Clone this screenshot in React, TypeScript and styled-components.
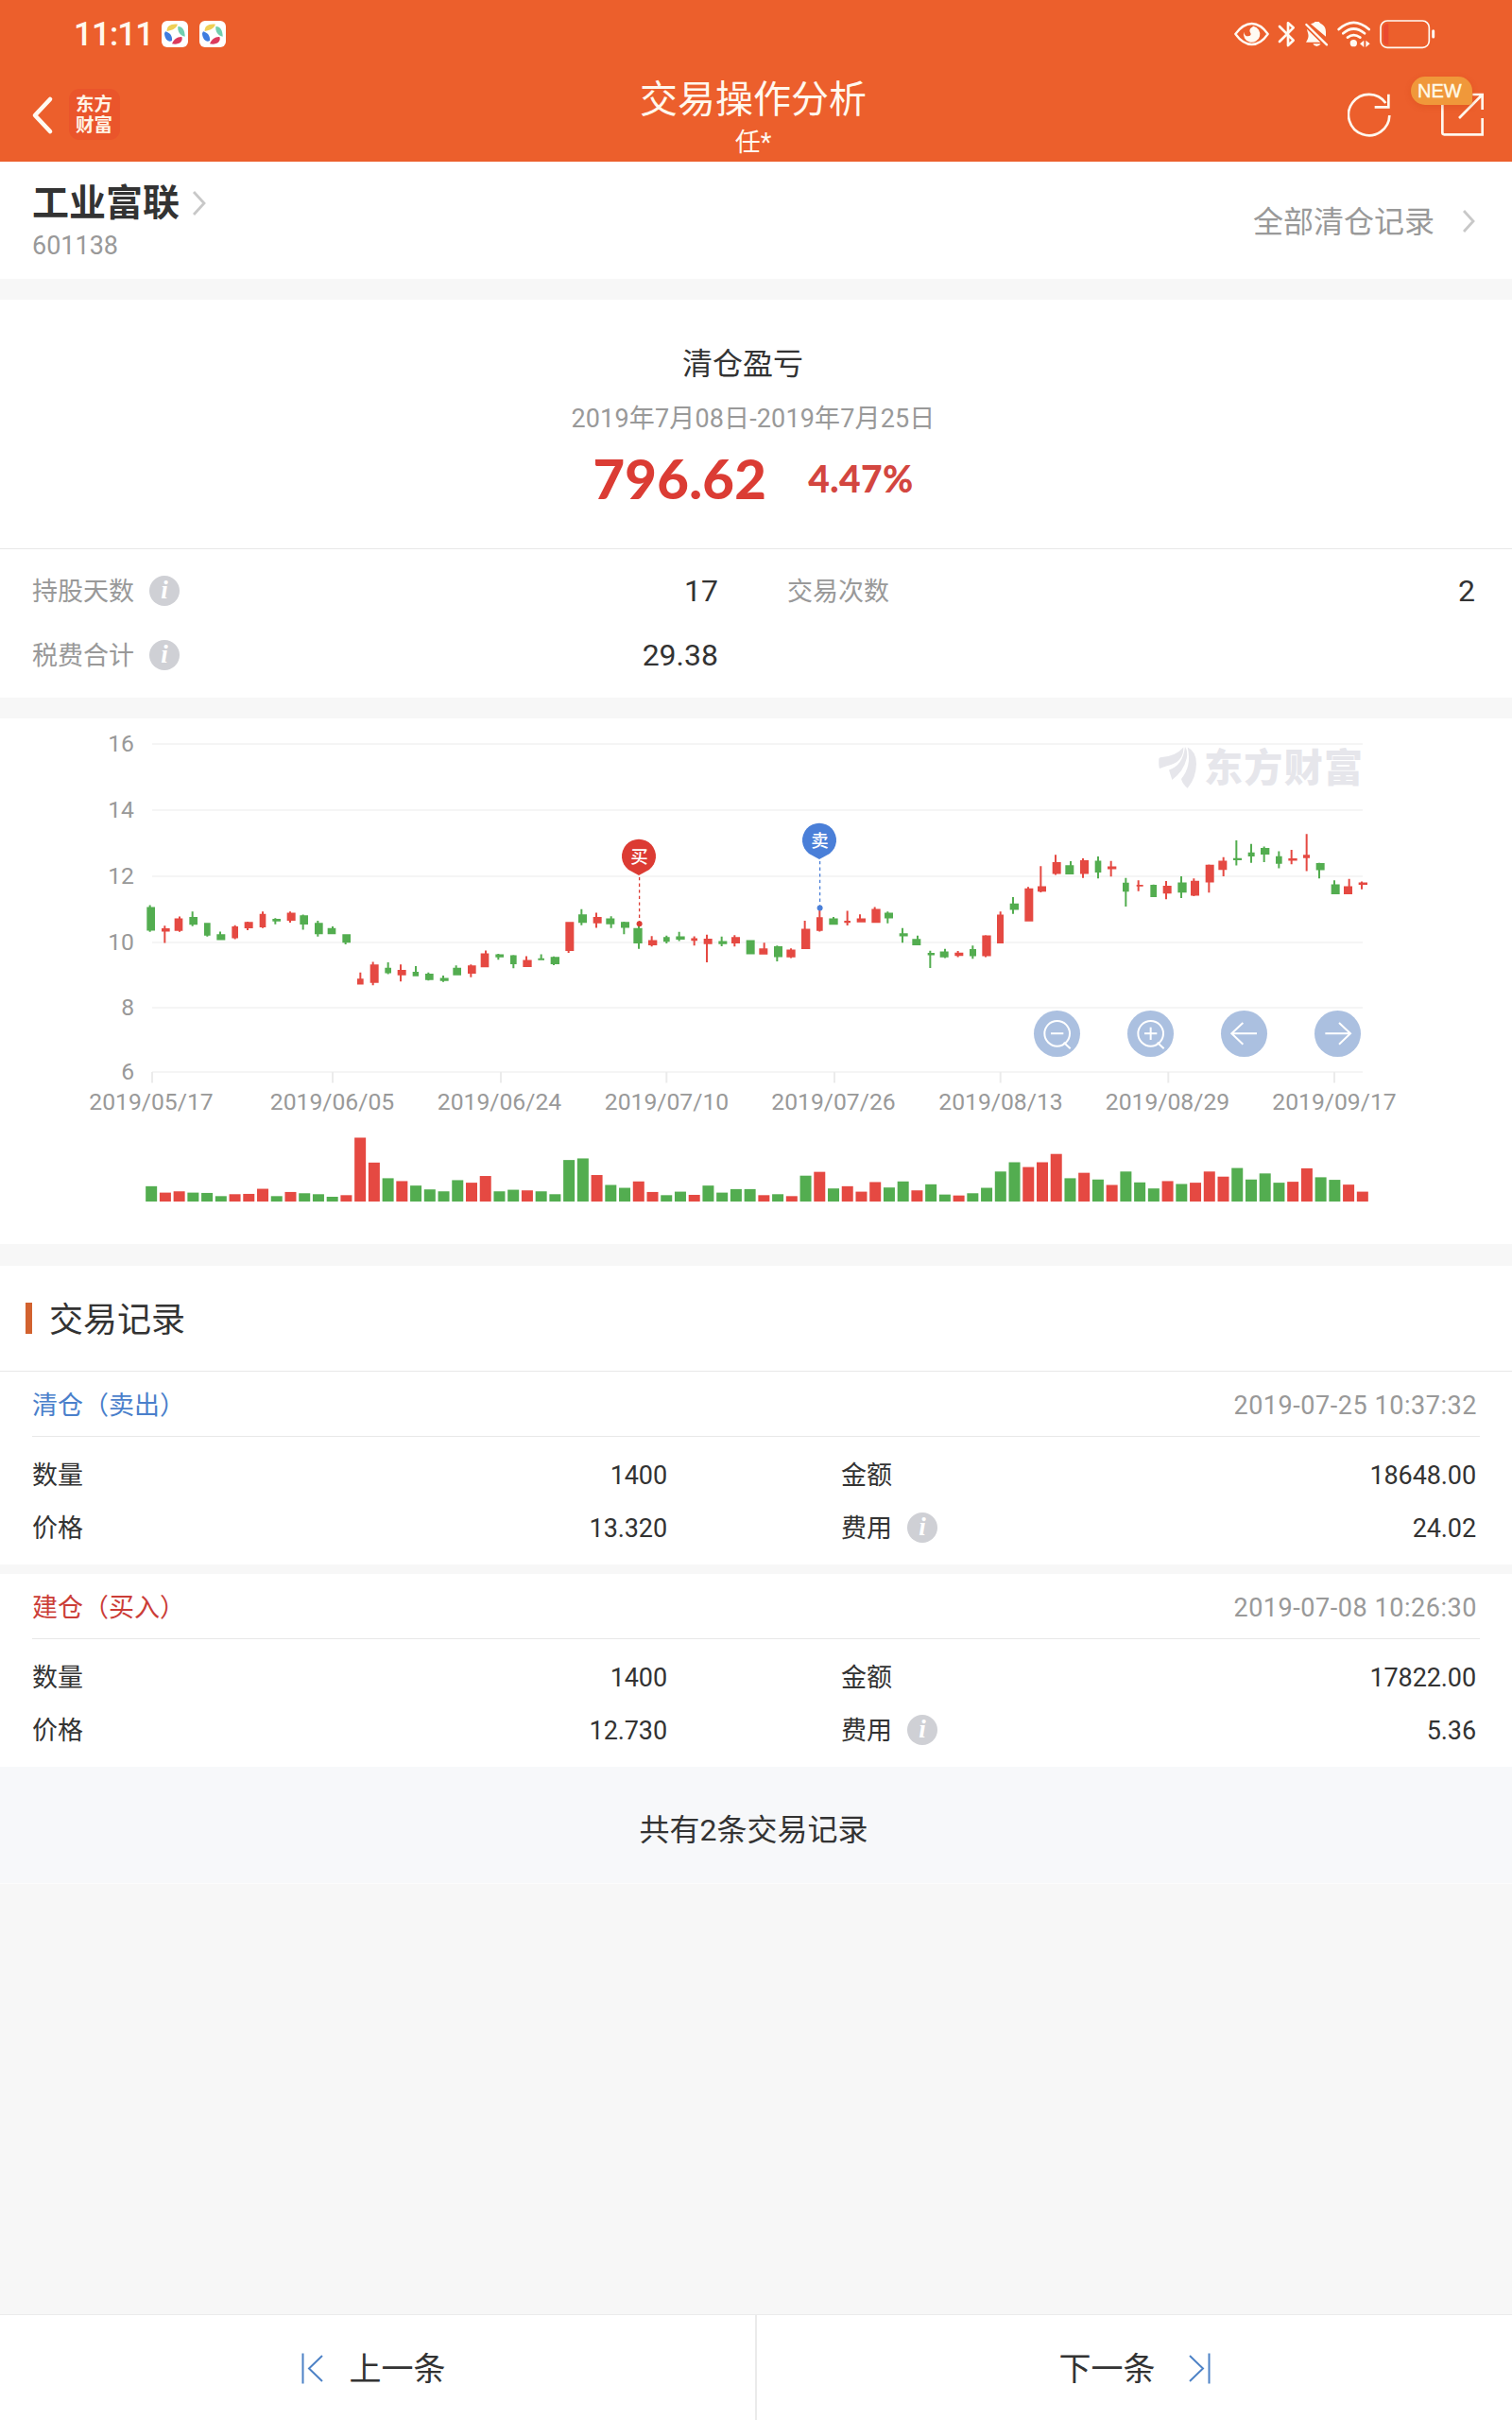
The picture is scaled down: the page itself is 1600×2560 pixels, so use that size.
import React from "react";
import styled, { createGlobalStyle } from "styled-components";

const Global = createGlobalStyle`
  * { box-sizing: border-box; }
  html, body { margin: 0; padding: 0; background: #f7f7f7; }
  body { font-family: Roboto, "Noto Sans CJK SC", sans-serif; color: #333; }
`;

const Page = styled.div`
  width: 1600px;
  height: 2560px;
  display: flex;
  flex-direction: column;
  background: #f7f7f7;
  overflow: hidden;
`;

/* ---------- header ---------- */

const Header = styled.header`
  height: 171px;
  flex: none;
  background: #ec5f2c;
  color: #fff8ee;
  display: flex;
  flex-direction: column;
`;

const StatusBar = styled.div`
  height: 72px;
  padding: 0 81px 0 78px;
  display: flex;
  justify-content: space-between;
  align-items: center;
`;

const StatusGroup = styled.div<{ $gap: number }>`
  display: flex;
  align-items: center;
  gap: ${(p) => p.$gap}px;
`;

const Clock = styled.span`
  font-size: 35px;
  font-weight: 500;
  line-height: 40px;
  width: 81px;
  padding-top: 1px;
  letter-spacing: -0.9px;
`;

const NavBar = styled.div`
  height: 99px;
  padding: 0 29px 0 33px;
  display: grid;
  grid-template-columns: 300px 1fr 310px;
`;

const NavLeft = styled.div`
  display: flex;
  align-items: flex-start;
  gap: 16px;
  padding-top: 22px;
`;

const BrandTile = styled.div`
  width: 54px;
  height: 54px;
  border-radius: 11px;
  background: #ea552b;
  color: #fff4e6;
  font: 700 19.5px/22px "Liberation Sans", "Noto Sans CJK SC", sans-serif;
  padding-top: 5px;
  padding-right: 1px;
  text-align: center;
`;

const NavTitle = styled.div`
  display: flex;
  flex-direction: column;
  align-items: center;
  padding-top: 10px;
`;

const Title = styled.h1`
  margin: 0 0 5px;
  font-size: 40px;
  line-height: 48px;
  font-weight: 400;
`;

const Subtitle = styled.div`
  font-size: 27px;
  line-height: 32px;
`;

const NavRight = styled.div`
  display: flex;
  justify-content: flex-end;
  gap: 51px;
  padding-top: 25px;
`;

const ShareWrap = styled.div`
  position: relative;
  width: 46px;
  height: 48px;
`;

const NewBadge = styled.span`
  position: absolute;
  left: -32px;
  top: -16px;
  width: 65px;
  height: 30px;
  border-radius: 15px 15px 4px 15px;
  background: #f0983a;
  color: #fffbe8;
  font: 20px/31px "Liberation Sans", Arial, sans-serif;
  -webkit-text-stroke: 0.4px #fffbe8;
  padding-left: 7px;
  box-shadow: 0 2px 6px rgba(200, 60, 10, 0.25);
`;

/* ---------- blocks ---------- */

const Block = styled.section<{ $height: number; $gap?: number }>`
  flex: none;
  height: ${(p) => p.$height}px;
  margin-bottom: ${(p) => p.$gap ?? 0}px;
  background: #fff;
`;

const StockBar = styled(Block)`
  display: flex;
  justify-content: space-between;
  padding: 0 39px 0 34px;
`;

const StockName = styled.div`
  display: flex;
  align-items: center;
  gap: 14px;
  padding-top: 19px;
  height: 69px;
  font-size: 39px;
  line-height: 50px;
  font-weight: 700;
`;

const StockCode = styled.div`
  font-size: 27px;
  line-height: 41px;
  color: #999;
`;

const AllRecords = styled.div`
  display: flex;
  align-items: center;
  gap: 30px;
  font-size: 32px;
  color: #999;
  padding-bottom: 3px;
  svg { position: relative; top: 2px; }
`;

const Profit = styled.div`
  height: 264px;
  border-bottom: 1px solid #e8e8e8;
  display: flex;
  flex-direction: column;
  align-items: center;
  padding-top: 44px;
`;

const ProfitTitle = styled.div`
  font-size: 32px;
  line-height: 48px;
  padding-right: 28px;
`;

const ProfitRange = styled.div`
  font-size: 27px;
  line-height: 40px;
  margin-top: 14px;
  padding-right: 6px;
  color: #999;
  letter-spacing: 0.15px;
`;

const ProfitFigures = styled.div`
  display: flex;
  align-items: center;
  gap: 44px;
  height: 72px;
  margin-top: 7px;
  padding-right: 6px;
  color: #db3c34;
  font-family: Lato, sans-serif;
  font-weight: 900;
`;

const Amount = styled.span`
  font-size: 58px;
  line-height: 72px;
  letter-spacing: 0.3px;
`;

const Percent = styled.span`
  font-size: 39px;
  line-height: 72px;
  color: #d34640;
  letter-spacing: 0.4px;
`;

const Stats = styled.div`
  display: grid;
  grid-template-columns: 725px 727px;
  column-gap: 74px;
  grid-auto-rows: 68px;
  padding: 10px 0 0 35px;
`;

const StatRow = styled.div`
  display: flex;
  align-items: center;
  justify-content: space-between;
`;

const Label = styled.span<{ $muted?: boolean }>`
  display: flex;
  align-items: center;
  gap: 16px;
  font-size: 27px;
  color: ${(p) => (p.$muted ? "#999" : "#333")};
`;

const LabelText = styled.span`
  margin: -3px 0 0 -1px;
`;

const StatValue = styled.span`
  font-size: 32px;
  color: #333;
`;

const InfoDot = styled.span`
  width: 32px;
  height: 32px;
  border-radius: 50%;
  background: #cfd0d5;
  color: #fff;
  font: italic 700 27px/31px "Liberation Serif", serif;
  text-align: center;
`;

/* ---------- chart ---------- */

const ChartBlock = styled(Block)`
  position: relative;
`;

const Tools = styled.div`
  position: absolute;
  left: 1094px;
  top: 309px;
  display: flex;
  gap: 50px;
`;

const ToolButton = styled.button`
  width: 49px;
  height: 49px;
  border: 0;
  padding: 0;
  border-radius: 50%;
  background: #abc0e0;
  svg { display: block; }
`;

const AxisText = styled.text`
  font: 24.7px Roboto, sans-serif;
  fill: #999;
`;

const PinText = styled.text`
  font: 500 18.5px "Noto Sans CJK SC", sans-serif;
  fill: #fff;
  text-anchor: middle;
`;

const BrandText = styled.text`
  font: 900 41px "Noto Sans CJK SC", sans-serif;
  fill: #e6e6eb;
`;

/* ---------- records ---------- */

const SectionHead = styled.div`
  height: 112px;
  display: flex;
  align-items: center;
  gap: 18px;
  padding-left: 27px;
  border-bottom: 1px solid #e8e8e8;
  font-size: 36px;
  &::before {
    content: "";
    width: 7px;
    height: 33px;
    background: #d2622f;
  }
  span { margin-top: -3px; }
`;

const Record = styled.article<{ $gap: number }>`
  height: 204px;
  flex: none;
  background: #fff;
  margin-bottom: ${(p) => p.$gap}px;
  padding: 0 34px 0 34px;
`;

const RecordHead = styled.div<{ $color: string }>`
  height: 69px;
  border-bottom: 1px solid #e8e8e8;
  padding: 0 3px 0 0;
  display: flex;
  justify-content: space-between;
  align-items: center;
  font-size: 27px;
  color: ${(p) => p.$color};
`;

const RecordKind = styled.span`
  margin-top: -1px;
`;

const RecordTime = styled.time`
  color: #999;
  letter-spacing: 0.55px;
  padding-top: 3px;
`;

const RecordGrid = styled.div`
  display: grid;
  grid-template-columns: 671px 671px;
  column-gap: 185px;
  grid-auto-rows: 56px;
  padding: 12px 0 0 1px;
`;

const RecordCell = styled.div`
  display: flex;
  align-items: center;
  justify-content: space-between;
  font-size: 27px;
`;

const RecordValue = styled.span`
  padding-top: 1px;
  letter-spacing: -0.1px;
`;

const Total = styled.div`
  flex: none;
  height: 124px;
  background: #f7f8fa;
  border-bottom: 1px solid #fcfcfc;
  display: flex;
  align-items: center;
  justify-content: center;
  padding: 4px 5px 0 0;
  font-size: 32px;
`;

const Pager = styled.nav`
  flex: none;
  height: 112px;
  margin-top: auto;
  background: #fff;
  border-top: 1px solid #ebebeb;
  display: grid;
  grid-template-columns: 801px 799px;
`;

const PagerItem = styled.div<{ $divider?: boolean }>`
  display: flex;
  align-items: center;
  justify-content: center;
  gap: ${(p) => (p.$divider ? 28 : 35)}px;
  font-size: 34px;
  padding-right: ${(p) => (p.$divider ? 9 : 0)}px;
  border-right: ${(p) => (p.$divider ? "2px solid #ebebeb" : "0")};
  span { margin-top: -2px; }
`;

/* ---------- icons ---------- */

const AppIcon = () => (
  <svg width="28" height="28" viewBox="0 0 84 84">
    <rect width="84" height="84" rx="18" fill="#fff" />
    <path d="M17 33C15 17 30 8 51 11C46 25 34 29 17 33Z" fill="#efcf55" />
    <path d="M52 18C66 17 74 31 74 50C60 48 50 36 52 18Z" fill="#72cfae" />
    <path d="M12 34C24 37 35 46 33 63C22 70 9 58 9 40Z" fill="#3f7de0" />
    <path d="M33 73C39 59 49 50 64 51C70 66 53 78 33 73Z" fill="#dc3a5c" />
  </svg>
);

const StatusIcons = () => (
  <svg width="213" height="34" viewBox="0 0 639 102" fill="none" stroke="#fffaf2">
    <g transform="translate(-198 -57)">
      <path d="M202 108Q226 75 254 75Q282 75 305 108Q282 141 254 141Q226 141 202 108Z" strokeWidth="7" strokeLinejoin="round" />
      <path d="M259 83A26 26 0 1 1 229 101Q231 116 243 115Q256 112 248 101Q244 91 259 83Z" fill="#fffaf2" stroke="none" />
      <path d="M342 84L386 128L369 144V73L386 88L342 132" strokeWidth="8" strokeLinejoin="round" strokeLinecap="round" />
      <path d="M441 76Q452 73 455 69H467Q470 74 477 77Q489 85 489 101V116ZM429 92L472 134H426Q436 120 433 108Q430 98 429 92ZM448 139H473Q468 147 460 147Q452 147 448 139Z" fill="#fffaf2" stroke="none" />
      <path d="M427 78L492 142" strokeWidth="7" strokeLinecap="round" />
      <path d="M530 93Q577 50 626 93M544 106Q577 77 612 106M558 119Q577 104 598 119" strokeWidth="8" strokeLinecap="round" />
      <circle cx="577" cy="137" r="11" fill="#fffaf2" stroke="none" />
      <path d="M597 139L610 128V150ZM616 128L629 139L616 150Z" fill="#fffaf2" stroke="none" />
      <rect x="663" y="66" width="154" height="85" rx="21" strokeWidth="5" />
      <path d="M688 75V142Q672 142 672 128V89Q672 75 688 75Z" fill="#ea4a30" stroke="none" />
      <path d="M830 98V117" strokeWidth="9" strokeLinecap="round" />
    </g>
  </svg>
);

const BackIcon = () => (
  <svg width="24" height="54" viewBox="0 0 24 54" fill="none" stroke="#fffaf2" strokeWidth="4.6" strokeLinecap="round" strokeLinejoin="round">
    <path d="M20 11L4 28L20 45" />
  </svg>
);

const RefreshIcon = () => (
  <svg width="48" height="48" viewBox="0 0 144 144" fill="none" stroke="#fff8ee" strokeWidth="8">
    <path d="M133 75A65 65 0 1 1 121 36" />
    <path d="M130 8V49H86" />
  </svg>
);

const ShareIcon = () => (
  <svg width="46" height="48" viewBox="0 0 138 144" fill="none" stroke="#fff8ee" strokeWidth="8">
    <path d="M4 36V130Q4 136 10 136H131V84" />
    <path d="M100 9H131V57M57 84L131 9" />
  </svg>
);

const Chevron = ({ w, h }: { w: number; h: number }) => (
  <svg width={w} height={h} viewBox={`0 0 ${w} ${h}`} fill="none" stroke="#c8c8c8" strokeWidth="2.8">
    <path d={`M1 1L${w - 2} ${h / 2}L1 ${h - 1}`} />
  </svg>
);

const StepIcon = ({ flip }: { flip?: boolean }) => (
  <svg width="23" height="34" viewBox="0 0 23 34" fill="none" stroke="#4d82c6" strokeWidth="2">
    <path d={flip ? "M1 4L15 17.500L1 31M21.500 1.500V33.500" : "M22 4L8 17.500L22 31M1.500 1.500V33.500"} />
  </svg>
);

const toolPaths = [
  "M114 73A40 40 0 1 1 34 73A40 40 0 1 1 114 73M54 73H94M95 101L116 121",
  "M114 73A40 40 0 1 1 34 73A40 40 0 1 1 114 73M54 73H94M74 53V93M95 101L116 121",
  "M114 73H36M70 39L34 73L70 107",
  "M34 73H112M78 39L114 73L78 107",
];

/* ---------- chart data ---------- */

// Series values are in chart units, measured from x = 80 of the chart;
// X_UNIT and Y_UNIT turn them into pixels.
const X_UNIT = 1 / 3;
const Y_UNIT = 0.33801;

// candle: colour, left, right, wick x, high, body top, body bottom, low
type Candle = [string, number, number, number, number, number, number, number];

const shift = (rows: Candle[], dx: number): Candle[] =>
  rows.map(([c, l, r, w, ...ys]) => [c, l + dx, r + dx, w + dx, ...ys] as Candle);

const candles: Candle[] = [
  ...shift([
    ["g", 226, 252, 236, 584, 590, 664, 668], ["r", 273, 299, 283, 649, 657, 667, 703],
    ["r", 314, 340, 330, 620, 626, 665, 668], ["g", 361, 387, 371, 604, 621, 646, 650],
    ["g", 408, 428, 418, 640, 640, 680, 683], ["g", 448, 475, 459, 667, 675, 694, 694],
    ["r", 496, 516, 506, 647, 651, 688, 691], ["r", 536, 563, 546, 636, 637, 657, 663],
    ["r", 584, 604, 594, 604, 612, 654, 656], ["g", 625, 651, 634, 625, 627, 635, 644],
    ["r", 671, 698, 681, 604, 608, 633, 639], ["g", 712, 738, 722, 614, 616, 645, 661],
    ["g", 759, 785, 769, 633, 640, 675, 683], ["g", 800, 826, 816, 651, 656, 675, 675],
    ["g", 847, 873, 857, 675, 675, 702, 707], ["r", 894, 914, 904, 795, 814, 833, 833],
    ["r", 935, 962, 944, 762, 770, 828, 835], ["g", 982, 1002, 992, 763, 780, 797, 800],
    ["r", 1022, 1049, 1032, 770, 787, 804, 823], ["g", 1070, 1089, 1080, 775, 793, 807, 807],
    ["g", 1110, 1136, 1120, 795, 799, 819, 820], ["g", 1157, 1184, 1167, 805, 812, 822, 825],
    ["g", 1198, 1224, 1208, 773, 780, 804, 804], ["r", 1245, 1271, 1255, 770, 773, 799, 810],
    ["r", 1286, 1312, 1302, 726, 735, 779, 779], ["g", 1333, 1359, 1342, 737, 738, 748, 755],
    ["g", 1380, 1400, 1390, 740, 741, 769, 782],
  ], 0),
  ...shift([
    ["r", 40, 68, 51, 744, 756, 778, 778], ["g", 88, 108, 98, 738, 751, 757, 757],
    ["g", 128, 156, 138, 745, 746, 769, 772], ["r", 175, 202, 185, 637, 637, 728, 734],
    ["g", 216, 243, 226, 597, 613, 640, 647], ["r", 263, 290, 273, 608, 621, 641, 655],
    ["g", 304, 331, 320, 619, 626, 644, 656], ["g", 351, 378, 361, 636, 637, 655, 675],
    ["g", 391, 419, 408, 640, 656, 704, 721], ["r", 438, 466, 449, 681, 694, 710, 714],
    ["g", 486, 506, 496, 680, 684, 699, 704], ["g", 526, 554, 536, 668, 682, 692, 697],
    ["r", 574, 594, 584, 682, 688, 696, 711], ["r", 614, 641, 624, 677, 689, 706, 763],
    ["g", 661, 688, 671, 683, 697, 706, 713], ["r", 702, 729, 712, 678, 684, 704, 714],
    ["g", 749, 776, 762, 694, 694, 738, 738], ["r", 790, 817, 806, 702, 720, 739, 739],
    ["g", 837, 864, 847, 711, 713, 747, 760], ["r", 877, 905, 891, 720, 723, 748, 750],
    ["r", 924, 952, 935, 633, 658, 722, 722], ["r", 972, 992, 982, 595, 622, 665, 667],
    ["g", 1012, 1040, 1026, 621, 626, 646, 646], ["r", 1060, 1080, 1070, 602, 633, 640, 648],
    ["r", 1100, 1128, 1110, 613, 626, 638, 638], ["r", 1147, 1175, 1157, 590, 596, 640, 640],
    ["g", 1188, 1215, 1198, 604, 608, 626, 641], ["g", 1235, 1262, 1245, 656, 672, 682, 702],
    ["g", 1276, 1303, 1293, 680, 690, 710, 710], ["g", 1325, 1347, 1333, 727, 734, 741, 781],
    ["g", 1364, 1391, 1380, 721, 729, 748, 750],
  ], 1380),
  ...shift([
    ["r", 31, 58, 41, 728, 733, 743, 747], ["g", 78, 99, 88, 711, 722, 744, 752],
    ["r", 118, 146, 129, 678, 679, 744, 747], ["r", 165, 186, 176, 604, 614, 704, 704],
    ["g", 206, 234, 216, 559, 579, 599, 612], ["r", 253, 280, 264, 527, 532, 635, 635],
    ["r", 294, 321, 304, 462, 525, 542, 544], ["r", 341, 368, 351, 427, 450, 487, 490],
    ["g", 382, 409, 399, 447, 459, 488, 488], ["r", 429, 456, 438, 438, 444, 487, 499],
    ["g", 476, 496, 486, 432, 445, 482, 501], ["r", 516, 544, 527, 446, 463, 472, 495],
    ["g", 564, 584, 574, 499, 514, 542, 589], ["r", 608, 629, 614, 507, 521, 526, 541],
    ["g", 652, 672, 662, 520, 521, 559, 559], ["r", 692, 719, 702, 509, 524, 548, 566],
    ["g", 739, 767, 750, 494, 513, 545, 562], ["r", 780, 807, 790, 501, 508, 555, 556],
    ["r", 827, 854, 838, 457, 458, 513, 545], ["r", 868, 895, 884, 434, 445, 474, 494],
    ["g", 915, 942, 925, 382, 437, 444, 460], ["g", 962, 983, 972, 393, 419, 432, 452],
    ["g", 1002, 1030, 1013, 401, 405, 426, 450], ["g", 1050, 1070, 1060, 416, 431, 455, 469],
    ["r", 1090, 1118, 1100, 411, 438, 445, 456], ["r", 1137, 1158, 1148, 362, 427, 437, 478],
    ["g", 1178, 1205, 1188, 452, 453, 475, 501], ["g", 1226, 1253, 1236, 507, 519, 550, 550],
    ["r", 1266, 1293, 1283, 502, 525, 550, 550], ["r", 1313, 1341, 1323, 510, 513, 521, 535],
  ], 2760),
];

const VOLUME_BASE = 1512;
const volumes =
  "g1464 r1484 r1480 g1484 g1485 g1495 r1489 r1488 r1472 g1495 r1482 g1486 g1489 g1497 r1492 r1312 r1390 g1439 r1448 g1462 g1474 g1480 g1445 r1453 r1432 g1480 g1475 r1477 g1480 g1489 g1382 g1377 r1429 g1460 g1469 r1449 r1482 g1492 g1481 r1491 g1462 g1484 g1473 g1473 r1492 g1489 r1495 g1431 r1419 g1471 r1464 r1481 r1451 g1468 g1449 r1477 g1458 g1490 r1493 g1486 g1469 g1418 g1389 r1404 r1389 r1363 g1439 r1422 g1443 r1460 g1418 g1452 g1471 r1448 g1457 r1453 r1418 r1434 g1407 g1443 g1424 g1453 r1450 r1408 g1436 g1444 r1459 r1481"
    .split(" ")
    .map((s) => ({ color: s[0], top: Number(s.slice(1)) }));

const tint = (c: string) => (c === "r" ? "#e54942" : "#53ad50");

const yTicks: [string, number][] = [["16", 27], ["14", 97], ["12", 167], ["10", 237], ["8", 306], ["6", 374]];
const xTicks: [string, number, number][] = [
  ["2019/05/17", 161, 160], ["2019/06/05", 352, 351.5], ["2019/06/24", 530, 528.5], ["2019/07/10", 705.3, 705.5],
  ["2019/07/26", 883, 882], ["2019/08/13", 1058.7, 1059], ["2019/08/29", 1236.3, 1235.5], ["2019/09/17", 1412, 1412],
];

const Pin = ({ x, y, dotY, color, text }: { x: number; y: number; dotY: number; color: string; text: string }) => (
  <g>
    <path d={`M${x} ${y + 20}L${x - 11} ${y + 14}A18 18 0 1 1 ${x + 11} ${y + 14}Z`} fill={color} />
    <PinText x={x + 0.5} y={y + 6.5}>{text}</PinText>
    <path d={`M${x + 0.6} ${y + 22}V${dotY}`} stroke={color} strokeWidth="1.3" strokeDasharray="3.300 3.300" />
    <circle cx={x + 0.6} cy={dotY} r="3" fill={color} />
  </g>
);

const Chart = () => (
  <svg width="1600" height="556" viewBox="0 0 1600 556">
    {yTicks.map(([label, y]) => (
      <g key={label}>
        <path d={`M161 ${y}H1442`} stroke="#f5f5f5" strokeWidth="2" />
        <AxisText x="142" y={y + 8.300} textAnchor="end">{label}</AxisText>
      </g>
    ))}
    {xTicks.map(([label, x, cx]) => (
      <g key={label}>
        <path d={`M${x} 374V385.500`} stroke="#ebebeb" strokeWidth="2" />
        <AxisText x={cx} y="413.700" textAnchor="middle">{label}</AxisText>
      </g>
    ))}
    <g transform={`translate(1000 0) scale(${X_UNIT} ${Y_UNIT})`} fill="#e6e6eb">
      <path d="M679 127Q679 121 688 121Q733 118 757 90Q758 132 715 146Q693 153 681 157Q678 148 679 127Z" />
      <path d="M762 89Q772 103 767 126Q757 167 721 192L711 161Q755 148 762 89Z" />
      <path d="M770 90Q798 103 798 142Q797 187 770 218Q754 205 750 189Q784 149 770 90Z" />
    </g>
    <BrandText x="1274" y="67" textLength="168">东方财富</BrandText>
    <g transform={`translate(80 0) scale(${X_UNIT} ${Y_UNIT})`}>
      {candles.map(([c, l, r, w, hi, top, bot, lo]) => (
        <path key={l} fill={tint(c)} d={`M${l} ${top}H${r}V${bot}H${l}ZM${w - 3} ${hi}h6V${lo}h-6Z`} />
      ))}
      {volumes.map((v, i) => (
        <rect key={i} x={222.5 + i * 44.195} y={v.top} width="36" height={VOLUME_BASE - v.top} fill={tint(v.color)} />
      ))}
    </g>
    <Pin x={676} y={146} dotY={217.3} color="#dc3b33" text="买" />
    <Pin x={867} y={129} dotY={200.4} color="#4a7fd8" text="卖" />
  </svg>
);

/* ---------- page ---------- */

const records = [
  { kind: "清仓（卖出）", color: "#4a7fcb", time: "2019-07-25 10:37:32", amount: "18648.00", price: "13.320", fee: "24.02", gap: 10 },
  { kind: "建仓（买入）", color: "#cb3d37", time: "2019-07-08 10:26:30", amount: "17822.00", price: "12.730", fee: "5.36", gap: 0 },
];

export default function App() {
  return (
    <Page>
      <Global />
      <Header>
        <StatusBar>
          <StatusGroup $gap={12}>
            <Clock>11:11</Clock>
            <AppIcon />
            <AppIcon />
          </StatusGroup>
          <StatusIcons />
        </StatusBar>
        <NavBar>
          <NavLeft>
            <BackIcon />
            <BrandTile>东方<br />财富</BrandTile>
          </NavLeft>
          <NavTitle>
            <Title>交易操作分析</Title>
            <Subtitle>任*</Subtitle>
          </NavTitle>
          <NavRight>
            <RefreshIcon />
            <ShareWrap>
              <ShareIcon />
              <NewBadge>NEW</NewBadge>
            </ShareWrap>
          </NavRight>
        </NavBar>
      </Header>

      <StockBar $height={124} $gap={22}>
        <div>
          <StockName>工业富联<Chevron w={14} h={26} /></StockName>
          <StockCode>601138</StockCode>
        </div>
        <AllRecords>全部清仓记录<Chevron w={13} h={24} /></AllRecords>
      </StockBar>

      <Block $height={421} $gap={22}>
        <Profit>
          <ProfitTitle>清仓盈亏</ProfitTitle>
          <ProfitRange>2019年7月08日-2019年7月25日</ProfitRange>
          <ProfitFigures>
            <Amount>796.62</Amount>
            <Percent>4.47%</Percent>
          </ProfitFigures>
        </Profit>
        <Stats>
          <StatRow><Label $muted><LabelText>持股天数</LabelText><InfoDot>i</InfoDot></Label><StatValue>17</StatValue></StatRow>
          <StatRow><Label $muted><LabelText>交易次数</LabelText></Label><StatValue>2</StatValue></StatRow>
          <StatRow><Label $muted><LabelText>税费合计</LabelText><InfoDot>i</InfoDot></Label><StatValue>29.38</StatValue></StatRow>
        </Stats>
      </Block>

      <ChartBlock $height={556} $gap={23}>
        <Chart />
        <Tools>
          {toolPaths.map((d) => (
            <ToolButton key={d}>
              <svg width="49" height="49" viewBox="0 0 147 147" fill="none" stroke="#fff" strokeWidth="6">
                <path d={d} />
              </svg>
            </ToolButton>
          ))}
        </Tools>
      </ChartBlock>

      <Block $height={112}>
        <SectionHead><span>交易记录</span></SectionHead>
      </Block>
      {records.map((r) => (
        <Record key={r.kind} $gap={r.gap}>
          <RecordHead $color={r.color}>
            <RecordKind>{r.kind}</RecordKind>
            <RecordTime>{r.time}</RecordTime>
          </RecordHead>
          <RecordGrid>
            <RecordCell><Label><LabelText>数量</LabelText></Label><RecordValue>1400</RecordValue></RecordCell>
            <RecordCell><Label><LabelText>金额</LabelText></Label><RecordValue>{r.amount}</RecordValue></RecordCell>
            <RecordCell><Label><LabelText>价格</LabelText></Label><RecordValue>{r.price}</RecordValue></RecordCell>
            <RecordCell><Label><LabelText>费用</LabelText><InfoDot>i</InfoDot></Label><RecordValue>{r.fee}</RecordValue></RecordCell>
          </RecordGrid>
        </Record>
      ))}
      <Total>共有2条交易记录</Total>

      <Pager>
        <PagerItem $divider><StepIcon /><span>上一条</span></PagerItem>
        <PagerItem><span>下一条</span><StepIcon flip /></PagerItem>
      </Pager>
    </Page>
  );
}
